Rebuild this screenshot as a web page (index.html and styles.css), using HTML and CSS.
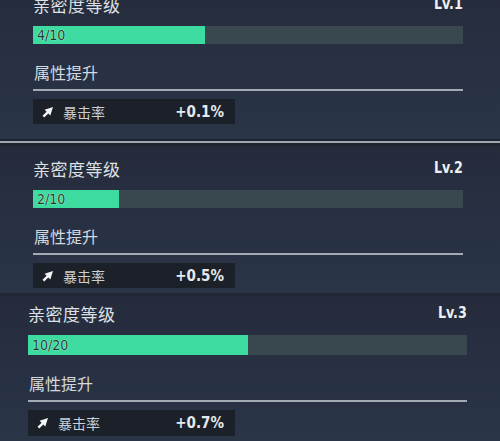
FILE: index.html
```html
<!DOCTYPE html>
<html lang="zh-CN">

<head>
    <meta charset="UTF-8">
    <meta name="viewport" content="width=device-width, initial-scale=1.0">
    <title>亲密度等级</title>
    <link rel="stylesheet" href="styles.css">
</head>

<body>
    <div class="levels">

        <!-- Level 1 -->
        <section class="level level-first">
            <div class="level-head">
                <span class="level-title">亲密度等级</span>
                <span class="level-num">Lv.1</span>
            </div>
            <div class="bar">
                <div class="bar-fill" style="width: 40%"></div>
                <span class="bar-text">4/10</span>
            </div>
            <div class="attr-title">属性提升</div>
            <div class="stat">
                <svg class="stat-icon" viewBox="0 0 12 12"><path d="M2.2 11.5 L0.5 9.8 L4.6 5.7 L2.6 3.7 L11 1 L8.3 9.4 L6.3 7.4 Z" fill="#f2f4f6"/></svg>
                <span class="stat-name">暴击率</span>
                <span class="stat-value">+0.1%</span>
            </div>
        </section>

        <!-- Level 2 -->
        <section class="level level-second">
            <div class="level-head">
                <span class="level-title">亲密度等级</span>
                <span class="level-num">Lv.2</span>
            </div>
            <div class="bar">
                <div class="bar-fill" style="width: 20%"></div>
                <span class="bar-text">2/10</span>
            </div>
            <div class="attr-title">属性提升</div>
            <div class="stat">
                <svg class="stat-icon" viewBox="0 0 12 12"><path d="M2.2 11.5 L0.5 9.8 L4.6 5.7 L2.6 3.7 L11 1 L8.3 9.4 L6.3 7.4 Z" fill="#f2f4f6"/></svg>
                <span class="stat-name">暴击率</span>
                <span class="stat-value">+0.5%</span>
            </div>
        </section>

        <!-- Level 3 -->
        <section class="level level-third">
            <div class="level-head">
                <span class="level-title">亲密度等级</span>
                <span class="level-num">Lv.3</span>
            </div>
            <div class="bar">
                <div class="bar-fill" style="width: 50%"></div>
                <span class="bar-text">10/20</span>
            </div>
            <div class="attr-title">属性提升</div>
            <div class="stat">
                <svg class="stat-icon" viewBox="0 0 12 12"><path d="M2.2 11.5 L0.5 9.8 L4.6 5.7 L2.6 3.7 L11 1 L8.3 9.4 L6.3 7.4 Z" fill="#f2f4f6"/></svg>
                <span class="stat-name">暴击率</span>
                <span class="stat-value">+0.7%</span>
            </div>
        </section>

    </div>
</body>

</html>
```

FILE: styles.css
```css
/* Page */
body {
    margin: 0;
    padding: 0;
    background-color: #283143;
    font-family: 'Noto Sans CJK SC', 'Noto Sans', sans-serif;
    color: #d9dde2;
    overflow: hidden;
}

.levels {
    display: flex;
    flex-direction: column;
    margin-top: -21px;
}

/* One level block */
.level {
    display: flex;
    flex-direction: column;
    padding: 14px 37px 5px 33px;
    background: linear-gradient(180deg, #252b3b 0%, #283144 60%, #2a3547 100%);
}

.level-first {
    padding-bottom: 17px;
    border-bottom: 2px solid #9ea6ae;
    box-shadow: 0 -2px 0 #1e2330 inset;
}

.level-second {
    border-top: 3px solid #1f2431;
    padding-top: 11px;
}

.level-third {
    padding: 6px 33px 5px 28px;
    border-top: 3px solid #222838;
}

.level-head {
    display: flex;
    justify-content: space-between;
    align-items: center;
    height: 23px;
}

.level-title {
    font-size: 17px;
    line-height: 23px;
    color: #dde1e5;
    letter-spacing: 0.5px;
}

.level-num {
    font-family: 'DejaVu Sans Condensed', 'DejaVu Sans', sans-serif;
    font-stretch: condensed;
    font-weight: bold;
    font-size: 16px;
    color: #eef0f2;
    margin-top: -3px;
    transform: scaleX(0.88);
    transform-origin: right center;
}

/* Progress bar */
.bar {
    position: relative;
    height: 18px;
    margin-top: 10px;
    background-color: #39474f;
}

.level-third .bar {
    height: 20px;
}

.bar-fill {
    height: 100%;
    background-color: #3ddb9f;
}

.bar-text {
    position: absolute;
    left: 4px;
    top: 0;
    bottom: 0;
    display: flex;
    align-items: center;
    font-family: 'DejaVu Sans Condensed', 'DejaVu Sans', sans-serif;
    font-size: 14px;
    color: #1a3a2e;
    text-shadow: 0 0 1px #c8f7e4, 0 0 1px #c8f7e4;
}

/* Attribute section */
.attr-title {
    margin-top: 17px;
    font-size: 16px;
    line-height: 23px;
    color: #d5d9de;
    padding-left: 1px;
    padding-bottom: 5px;
    border-bottom: 2px solid #a2aab2;
}

.stat {
    display: flex;
    align-items: center;
    width: 202px;
    height: 25px;
    margin-top: 8px;
    padding: 0 11px 0 9px;
    box-sizing: border-box;
    background-color: #1b2029;
}

.level-third .stat {
    width: 207px;
    height: 26px;
}

.stat-icon {
    width: 12px;
    height: 12px;
    margin-right: 9px;
}

.stat-name {
    flex: 1;
    font-size: 14px;
    color: #c9cfd2;
}

.stat-value {
    font-family: 'DejaVu Sans Condensed', 'DejaVu Sans', sans-serif;
    font-weight: bold;
    font-size: 15px;
    color: #e6e9ec;
}
```
